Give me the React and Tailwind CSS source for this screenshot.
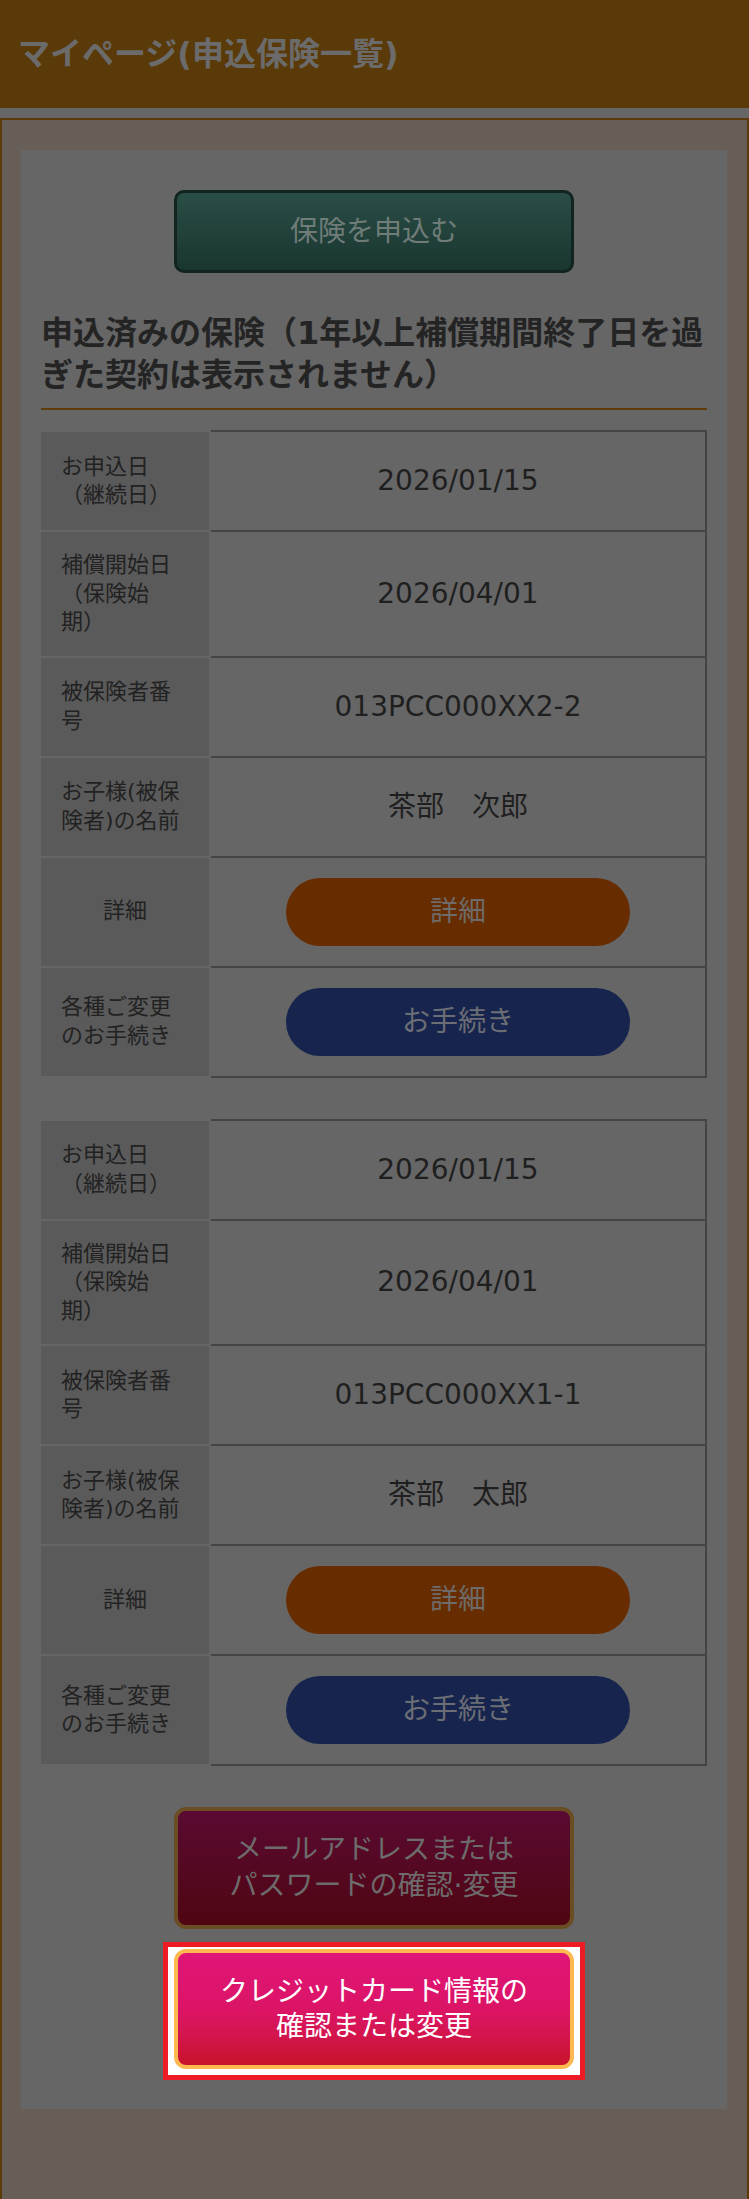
import React from "react";

const policies = [
  { applied: "2026/01/15", start: "2026/04/01", no: "013PCC000XX2-2", name: "茶部　次郎" },
  { applied: "2026/01/15", start: "2026/04/01", no: "013PCC000XX1-1", name: "茶部　太郎" },
];

function Row({ label, center, last, children, button }) {
  return (
    <div className="flex">
      <div
        className={
          "flex w-[170px] shrink-0 items-center border-t-2 border-r-2 border-[#666666] bg-[#5a5a5a] px-5 py-[19px] text-[22px] leading-[28.5px] text-[#222222] " +
          (center ? "justify-center text-center " : "") +
          (last ? "border-b-2" : "")
        }
      >
        <span>{label}</span>
      </div>
      <div
        className={
          "flex flex-1 items-center justify-center border-t-2 border-r-2 border-[#444444] text-[28px] leading-[40px] text-[#1f1f1f] " +
          (button ? "py-5 " : "py-[29px] ") +
          (last ? "border-b-2" : "")
        }
      >
        {children}
      </div>
    </div>
  );
}

function PolicyTable({ p, className }) {
  return (
    <div className={className}>
      <Row label="お申込日（継続日）">{p.applied}</Row>
      <Row label="補償開始日（保険始期）">{p.start}</Row>
      <Row label="被保険者番号">{p.no}</Row>
      <Row label="お子様(被保険者)の名前">{p.name}</Row>
      <Row label="詳細" center button>
        <button className="flex h-[68px] w-[344px] items-center justify-center rounded-full bg-[#672c00] text-[28px] text-[#6e6b68]">
          詳細
        </button>
      </Row>
      <Row label="各種ご変更のお手続き" button last>
        <button className="flex h-[68px] w-[344px] items-center justify-center rounded-full bg-[#17254e] text-[28px] text-[#6c6e75]">
          お手続き
        </button>
      </Row>
    </div>
  );
}

export default function App() {
  return (
    <div className="min-h-[2199px] w-[749px] bg-[#666666] font-['DejaVu_Sans','Noto_Sans_CJK_JP',sans-serif] [text-spacing-trim:space-all]">
      <header className="flex h-[108px] items-center bg-[#5a3a08] pl-[18px]">
        <h1 className="text-[32px] font-bold leading-none text-[#6b6b6b]">マイページ(申込保険一覧)</h1>
      </header>

      <div className="mt-[10px] border-2 border-[#5a3a08] bg-[#665e57] pt-[30px] pb-[91px] pl-[19px] pr-[20px]">
        <main className="bg-[#666666] px-5 pt-10 pb-10">
          <button className="mx-auto flex h-[83px] w-[400px] items-center justify-center rounded-[10px] border-[3px] border-[#12241f] bg-linear-to-b from-[#2a4e47] to-[#1a3630] text-[28px] text-[#6f7c78]">
            保険を申込む
          </button>

          <h2 className="mt-[39px] border-b-2 border-[#5e3d0a] pb-3 text-[32px] font-bold leading-[42px] text-[#242424]">
            申込済みの保険（1年以上補償期間終了日を過ぎた契約は表示されません）
          </h2>

          <PolicyTable p={policies[0]} className="mt-5" />
          <PolicyTable p={policies[1]} className="mt-[41px]" />

          <button className="mx-auto mt-[41px] flex h-[122px] w-[400px] flex-col items-center justify-center rounded-[12px] border-4 border-[#6b4d23] bg-linear-to-b from-[#5a0a31] to-[#500511] text-[28px] leading-[36px] text-[#6d6b6b]">
            <span>メールアドレスまたは</span>
            <span>パスワードの確認·変更</span>
          </button>

          <div className="relative mx-auto mt-5 w-[400px]">
            <div className="absolute -top-[7px] -right-[11px] -bottom-[11px] -left-[11px] border-[5px] border-[#ed1c24] bg-white"></div>
            <button className="relative flex h-[120px] w-[400px] flex-col items-center justify-center rounded-[12px] border-4 border-[#fdb950] bg-linear-to-b from-[#df1578] via-[#dc1466] to-[#c9122a] text-[28px] leading-[35px] text-white">
              <span>クレジットカード情報の</span>
              <span>確認または変更</span>
            </button>
          </div>
        </main>
      </div>
    </div>
  );
}
